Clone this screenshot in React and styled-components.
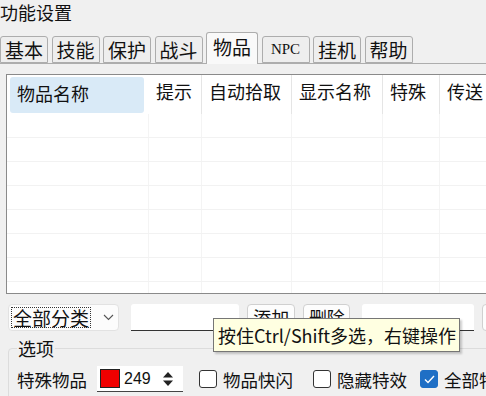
import styled, { createGlobalStyle } from "styled-components";

const GlobalStyle = createGlobalStyle`
    body {
        margin: 0;
        background: #f0f0f0;
        font-family: "Noto Sans CJK SC", "Noto Sans", sans-serif;
        color: #111;
    }
`;

const tabs = ["基本", "技能", "保护", "战斗", "物品", "NPC", "挂机", "帮助"];

const columns = [
    { title: "物品名称", width: 142 },
    { title: "提示", width: 53 },
    { title: "自动拾取", width: 90 },
    { title: "显示名称", width: 91 },
    { title: "特殊", width: 57 },
    { title: "传送", width: 80 },
];

export default function App() {
    const rows = [0, 1, 2, 3, 4, 5, 6, 7];

    return (
        <Page>
            <GlobalStyle />
            <Title>功能设置</Title>

            <TabBar>
                {tabs.map((t) => (
                    <Tab key={t} active={t === "物品"} latin={t === "NPC"}>
                        {t}
                    </Tab>
                ))}
            </TabBar>

            <Table>
                <HeaderRow>
                    {columns.map((c, i) => (
                        <HeaderCell key={c.title} style={{ width: c.width }} first={i === 0}>
                            <span className={i === 0 ? "selected" : ""}>{c.title}</span>
                        </HeaderCell>
                    ))}
                </HeaderRow>
                {rows.map((r) => (
                    <BodyRow key={r}>
                        {columns.map((c) => (
                            <BodyCell key={c.title} style={{ width: c.width }} />
                        ))}
                    </BodyRow>
                ))}
            </Table>

            <Controls>
                <Select>
                    <span className="focus">全部分类</span>
                    <svg width="11" height="7" viewBox="0 0 11 7">
                        <path d="M1 1 L5.5 5.5 L10 1" fill="none" stroke="#555" strokeWidth="1.1" />
                    </svg>
                </Select>
                <LineInput width={110} />
                <Button>添加</Button>
                <Button>删除</Button>
                <LineInput width={113} />
                <Button />
            </Controls>

            <Group>
                <legend>选项</legend>
                <OptionRow>
                    <span>特殊物品</span>
                    <NumberBox>
                        <Swatch />
                        <span className="value">249</span>
                        <svg width="12" height="18" viewBox="0 0 12 18">
                            <path d="M6 2 L11 7.5 L1 7.5 Z" fill="#222" />
                            <path d="M6 16 L11 10.5 L1 10.5 Z" fill="#222" />
                        </svg>
                    </NumberBox>
                    <Check gap={16}>
                        <Box />
                        物品快闪
                    </Check>
                    <Check gap={20}>
                        <Box />
                        隐藏特效
                    </Check>
                    <Check gap={13}>
                        <Box checked>
                            <svg width="11" height="9" viewBox="0 0 11 9">
                                <path d="M1 4.5 L4 7.5 L10 1" fill="none" stroke="#fff" strokeWidth="1.4" />
                            </svg>
                        </Box>
                        全部特效
                    </Check>
                </OptionRow>
                <OptionRow indent={24}>
                    <span>物品颜色</span>
                </OptionRow>
            </Group>

            <Tooltip>按住Ctrl/Shift多选，右键操作</Tooltip>
        </Page>
    );
}

const Page = styled.div`
    position: relative;
    width: 486px;
    height: 396px;
    overflow: hidden;
    background: #f0f0f0;
`;

const Title = styled.div`
    font-size: 18px;
    line-height: 24px;
    height: 32px;
`;

const TabBar = styled.div`
    display: flex;
    align-items: flex-end;
    gap: 3px;
    height: 31px;
    border-bottom: 1px solid #adadad;
    width: 520px;
`;

const Tab = styled.div`
    box-sizing: border-box;
    width: ${(p) => (p.active ? "52px" : "48px")};
    height: ${(p) => (p.active ? "32px" : "27px")};
    margin-bottom: ${(p) => (p.active ? "-1px" : "0")};
    margin-right: 0.5px;
    border: 1px solid #adadad;
    border-bottom: ${(p) => (p.active ? "none" : "1px solid #adadad")};
    border-radius: 3px 3px 0 0;
    background: ${(p) => (p.active ? "#f9f9f9" : "#eeeeee")};
    font-family: ${(p) => (p.latin ? '"Liberation Serif", serif' : '"Noto Sans CJK SC", sans-serif')};
    font-size: ${(p) => (p.latin ? "15px" : "19px")};
    line-height: ${(p) => (p.active ? "28px" : "25px")};
    text-align: center;
    white-space: nowrap;
    color: #111;
`;

const Table = styled.div`
    margin: 10px 0 0 6px;
    width: 520px;
    height: 220px;
    box-sizing: border-box;
    border: 1px solid #8a8a8a;
    border-right: none;
    background: #fff;
    overflow: hidden;
`;

const HeaderRow = styled.div`
    display: flex;
    height: 39px;
`;

const HeaderCell = styled.div`
    box-sizing: border-box;
    height: 39px;
    padding: ${(p) => (p.first ? "2px 4px 0 3px" : "0 0 0 7px")};
    border-right: 1px solid ${(p) => (p.first ? "transparent" : "#e5e5e5")};
    font-size: 18px;
    line-height: 33px;

    span {
        display: block;
    }

    .selected {
        background: #d9eaf7;
        border-radius: 3px;
        padding-left: 7px;
        height: 36px;
    }
`;

const BodyRow = styled.div`
    display: flex;
    height: 24px;
    border-bottom: 1px solid #f2f2f2;
    box-sizing: border-box;
`;

const BodyCell = styled.div`
    box-sizing: border-box;
    border-right: 1px solid #f4f4f4;
`;

const Controls = styled.div`
    display: flex;
    align-items: center;
    height: 27px;
    margin-top: 10px;
    padding-left: 8px;
    width: 520px;
`;

const Select = styled.div`
    box-sizing: border-box;
    display: flex;
    align-items: center;
    justify-content: space-between;
    width: 112px;
    height: 27px;
    padding: 0 4px 0 2px;
    background: #fcfcfc;
    border: 1px solid #e2e2e2;
    border-radius: 4px;

    .focus {
        font-size: 19px;
        line-height: 19px;
        border: 1px dotted #333;
        padding: 0 1px;
        white-space: nowrap;
    }
`;

const LineInput = styled.div`
    box-sizing: border-box;
    width: ${(p) => p.width}px;
    height: 27px;
    margin-left: 12px;
    background: #fff;
    border-bottom: 1px solid #333;
    border-radius: 3px 3px 0 0;
`;

const Button = styled.div`
    box-sizing: border-box;
    height: 27px;
    min-width: 46px;
    margin-left: 8px;
    padding: 0 5px;
    background: #fdfdfd;
    border: 1px solid #d0d0d0;
    border-radius: 4px;
    font-size: 18px;
    line-height: 24px;
    white-space: nowrap;
`;

const Group = styled.fieldset`
    margin: 7px 0 0 8px;
    padding: 5px 0 0 8px;
    width: 520px;
    border: 1px solid #dcdcdc;
    border-radius: 4px;

    legend {
        font-size: 18px;
        line-height: 20px;
        padding: 0 1px;
        margin-left: 0;
    }
`;

const OptionRow = styled.div`
    display: flex;
    align-items: center;
    height: 26px;
    padding-left: ${(p) => p.indent || 0}px;
    font-size: 17.5px;
    margin-top: 3px;
    white-space: nowrap;
`;

const NumberBox = styled.div`
    display: flex;
    align-items: center;
    box-sizing: border-box;
    width: 86px;
    height: 26px;
    margin-left: 10px;
    padding-left: 3px;
    background: #fff;
    border-bottom: 1px solid #444;

    .value {
        font-family: "Liberation Sans", sans-serif;
        font-size: 16px;
        margin-left: 4px;
        width: 38px;
    }
`;

const Swatch = styled.div`
    width: 18px;
    height: 17px;
    background: #f00000;
    border: 1px solid #222;
`;

const Check = styled.label`
    display: flex;
    align-items: center;
    gap: 6px;
    margin-left: ${(p) => p.gap}px;
`;

const Box = styled.div`
    box-sizing: border-box;
    display: flex;
    align-items: center;
    justify-content: center;
    width: 18px;
    height: 18px;
    border-radius: 3px;
    border: 1px solid ${(p) => (p.checked ? "#1f6fc5" : "#333")};
    background: ${(p) => (p.checked ? "#1f6fc5" : "#fff")};
`;

const Tooltip = styled.div`
    position: absolute;
    left: 213px;
    top: 318px;
    box-sizing: border-box;
    width: 247px;
    height: 34px;
    padding-left: 4px;
    background: #ffffe1;
    border: 1px solid #767676;
    box-shadow: 2px 2px 2px rgba(0, 0, 0, 0.2);
    font-size: 18px;
    line-height: 32px;
    white-space: nowrap;
    overflow: hidden;
    color: #111;
`;
